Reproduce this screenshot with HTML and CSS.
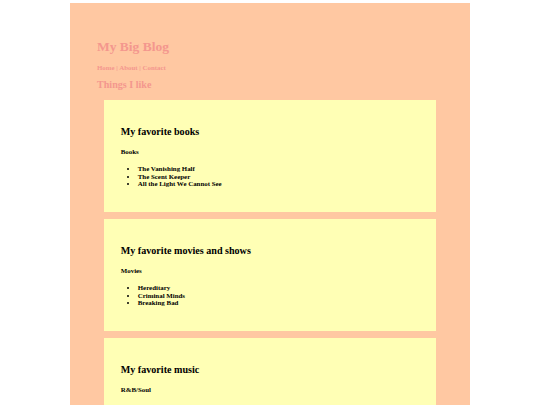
FILE: index.html
```html
<!DOCTYPE html>
<html lang="en">
<head>
    <meta charset="UTF-8">
    <meta name="viewport" content="width=device-width, initial-scale=1.0">
    <title>My Big Blog</title>
    <link rel="stylesheet" href="styles.css">
</head>
<body>
<div class="page">
    <h1 class="blog-name">My Big Blog</h1>
    <p class="nav">Home | About | Contact</p>

    <h2 class="section-title">Things I like</h2>

    <div class="card">
        <h2 class="card-title">My favorite books</h2>
        <h4 class="card-sub">Books</h4>
        <ul class="card-list">
            <li>The Vanishing Half</li>
            <li>The Scent Keeper</li>
            <li>All the Light We Cannot See</li>
        </ul>
    </div>

    <div class="card">
        <h2 class="card-title">My favorite movies and shows</h2>
        <h4 class="card-sub">Movies</h4>
        <ul class="card-list">
            <li>Hereditary</li>
            <li>Criminal Minds</li>
            <li>Breaking Bad</li>
        </ul>
    </div>

    <div class="card">
        <h2 class="card-title">My favorite music</h2>
        <h4 class="card-sub">R&amp;B/Soul</h4>
        <ul class="card-list">
            <li>Frank Ocean</li>
            <li>SZA</li>
            <li>Daniel Caesar</li>
        </ul>
    </div>
</div>
</body>
</html>
```

FILE: styles.css
```css
body
{
    margin:3px;
    background-color:white;
    font-family:"Liberation Serif", "Times New Roman", serif;
    font-weight:bold;
}
.page
{
    width:346px;
    margin:0 auto;
    padding:27px;
    background-color:#ffc8a2;
    color:#f4978e;
    min-height:500px;
}
.blog-name
{
    font-size:13.5px;
    margin:9px 0;
}
.nav
{
    font-size:6.9px;
    margin:6.75px 0;
}
.section-title
{
    font-size:10.1px;
    margin:8.4px 0 9.5px;
}
.card
{
    background-color:#ffffb5;
    color:black;
    margin:6.75px;
    padding:17px;
}
.card-title
{
    font-size:10.1px;
    margin:9px 0 11px;
}
.card-sub
{
    font-size:6.9px;
    margin:0 0 10px;
}
.card-list
{
    font-size:6.9px;
    margin:0 0 6.75px;
    padding-left:17px;
}
.card-list li
{
    line-height:7.8px;
}
```
